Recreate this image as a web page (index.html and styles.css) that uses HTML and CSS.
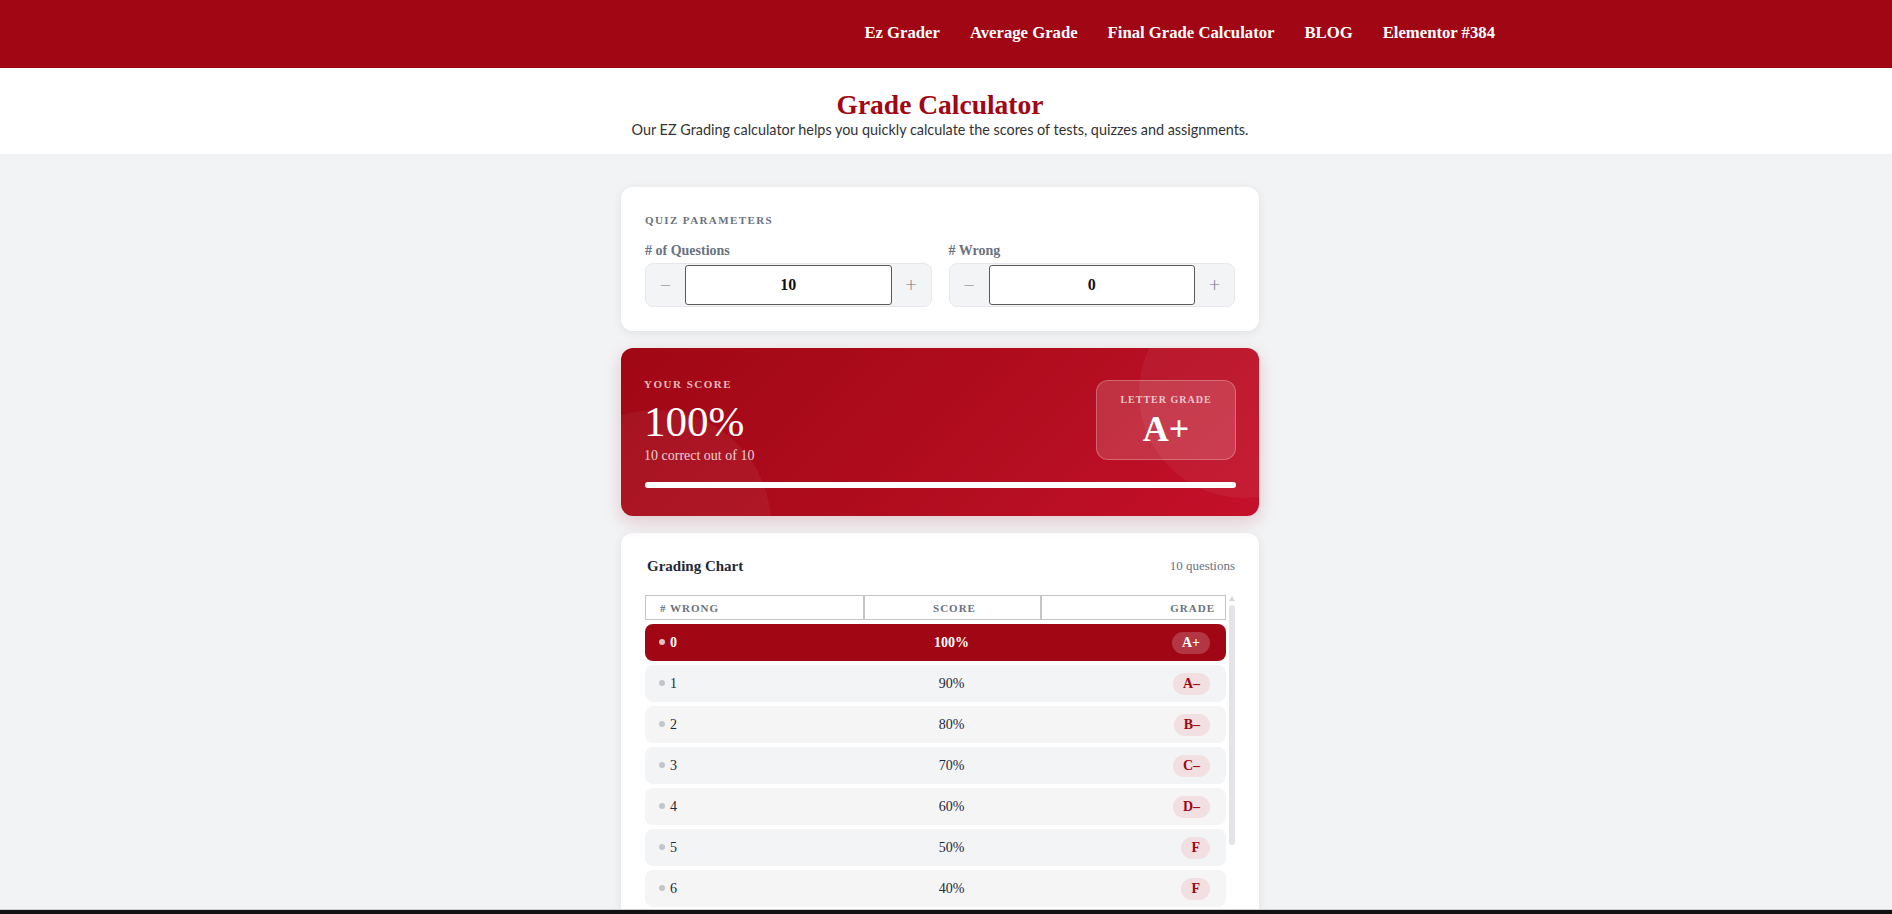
FILE: index.html
```html
<!DOCTYPE html>
<html lang="en">

<head>
    <meta charset="UTF-8">
    <meta name="viewport" content="width=device-width, initial-scale=1.0">
    <title>Grade Calculator</title>
    <link rel="stylesheet" href="styles.css">
</head>

<body>
    <header class="site-header">
        <div class="inner">
            <nav class="main-nav">
                <a href="#">Ez Grader</a>
                <a href="#">Average Grade</a>
                <a href="#">Final Grade Calculator</a>
                <a href="#">BLOG</a>
                <a href="#">Elementor #384</a>
            </nav>
        </div>
    </header>

    <section class="hero">
        <h1>Grade Calculator</h1>
        <p>Our EZ Grading calculator helps you quickly calculate the scores of tests, quizzes and assignments.</p>
    </section>

    <main class="calc">
        <!-- inputs -->
        <div class="card params">
            <div class="section-label">Quiz Parameters</div>
            <div class="fields">
                <div class="field">
                    <label># of Questions</label>
                    <div class="stepper">
                        <button class="step-btn">&minus;</button>
                        <input class="step-input" type="text" value="10">
                        <button class="step-btn">+</button>
                    </div>
                </div>
                <div class="field">
                    <label># Wrong</label>
                    <div class="stepper">
                        <button class="step-btn">&minus;</button>
                        <input class="step-input" type="text" value="0">
                        <button class="step-btn">+</button>
                    </div>
                </div>
            </div>
        </div>

        <!-- result -->
        <div class="score-card">
            <span class="bubble bubble-left"></span>
            <span class="bubble bubble-right"></span>
            <div class="score-top">
                <div class="score-main">
                    <div class="score-label">Your Score</div>
                    <div class="score-value">100%</div>
                    <div class="score-sub">10 correct out of 10</div>
                </div>
                <div class="letter-box">
                    <div class="letter-label">Letter Grade</div>
                    <div class="letter-value">A+</div>
                </div>
            </div>
            <div class="progress"><div class="progress-fill" style="width:100%"></div></div>
        </div>

        <!-- chart -->
        <div class="card chart">
            <div class="chart-head">
                <h2>Grading Chart</h2>
                <span class="chart-count">10 questions</span>
            </div>
            <div class="chart-body">
                <div class="chart-scroll">
                    <table class="grade-table">
                        <thead>
                            <tr>
                                <th class="col-wrong"># Wrong</th>
                                <th class="col-score">Score</th>
                                <th class="col-grade">Grade</th>
                            </tr>
                        </thead>
                        <tbody>
                            <tr class="current">
                                <td class="col-wrong"><span class="dot"></span>0</td>
                                <td class="col-score">100%</td>
                                <td class="col-grade"><span class="pill">A+</span></td>
                            </tr>
                            <tr>
                                <td class="col-wrong"><span class="dot"></span>1</td>
                                <td class="col-score">90%</td>
                                <td class="col-grade"><span class="pill">A&ndash;</span></td>
                            </tr>
                            <tr>
                                <td class="col-wrong"><span class="dot"></span>2</td>
                                <td class="col-score">80%</td>
                                <td class="col-grade"><span class="pill">B&ndash;</span></td>
                            </tr>
                            <tr>
                                <td class="col-wrong"><span class="dot"></span>3</td>
                                <td class="col-score">70%</td>
                                <td class="col-grade"><span class="pill">C&ndash;</span></td>
                            </tr>
                            <tr>
                                <td class="col-wrong"><span class="dot"></span>4</td>
                                <td class="col-score">60%</td>
                                <td class="col-grade"><span class="pill">D&ndash;</span></td>
                            </tr>
                            <tr>
                                <td class="col-wrong"><span class="dot"></span>5</td>
                                <td class="col-score">50%</td>
                                <td class="col-grade"><span class="pill">F</span></td>
                            </tr>
                            <tr>
                                <td class="col-wrong"><span class="dot"></span>6</td>
                                <td class="col-score">40%</td>
                                <td class="col-grade"><span class="pill">F</span></td>
                            </tr>
                            <tr>
                                <td class="col-wrong"><span class="dot"></span>7</td>
                                <td class="col-score">30%</td>
                                <td class="col-grade"><span class="pill">F</span></td>
                            </tr>
                            <tr>
                                <td class="col-wrong"><span class="dot"></span>8</td>
                                <td class="col-score">20%</td>
                                <td class="col-grade"><span class="pill">F</span></td>
                            </tr>
                            <tr>
                                <td class="col-wrong"><span class="dot"></span>9</td>
                                <td class="col-score">10%</td>
                                <td class="col-grade"><span class="pill">F</span></td>
                            </tr>
                            <tr>
                                <td class="col-wrong"><span class="dot"></span>10</td>
                                <td class="col-score">0%</td>
                                <td class="col-grade"><span class="pill">F</span></td>
                            </tr>
                        </tbody>
                    </table>
                </div>
                <div class="scrollbar"><div class="scroll-thumb"></div></div>
            </div>
        </div>
    </main>

    <div class="window-edge"></div>
</body>

</html>
```

FILE: styles.css
```css
body {
    margin: 0;
    background: #f2f3f5;
    font-family: 'Liberation Serif', 'Times New Roman', serif;
    color: #1f2937;
}

/* header */
.site-header {
    background: #a00613;
    height: 68px;
    padding-right: 12px;
}

.site-header .inner {
    max-width: 1140px;
    height: 65px;
    margin: 0 auto;
    display: flex;
    align-items: center;
    justify-content: flex-end;
    padding-right: 15px;
    box-sizing: border-box;
}

.main-nav {
    display: flex;
    gap: 30px;
}

.main-nav a {
    color: #fff;
    text-decoration: none;
    font-weight: bold;
    font-size: 16.7px;
}

/* hero */
.hero {
    background: #fff;
    text-align: center;
    padding: 21px 12px 15px 0;
}

.hero h1 {
    margin: 0;
    color: #a00613;
    font-size: 27.5px;
    line-height: 32px;
}

.hero p {
    margin: 0;
    font-family: Lato, 'Noto Sans', sans-serif;
    font-size: 14.4px;
    line-height: 18px;
    color: #333;
}

/* calculator */
.calc {
    width: 638px;
    margin: 0 auto;
    padding: 33px 12px 0 0;
}

.card {
    background: #fff;
    border-radius: 12px;
    box-shadow: 0 2px 10px rgba(0, 0, 0, .08);
    margin-bottom: 17px;
}

.params {
    padding: 27px 24px 24px;
}

.section-label {
    font-size: 11px;
    font-weight: bold;
    text-transform: uppercase;
    letter-spacing: 1.4px;
    color: #6b7280;
    line-height: 12px;
}

.fields {
    display: grid;
    grid-template-columns: minmax(0, 1fr) minmax(0, 1fr);
    gap: 17px;
    margin-top: 17px;
}

.field label {
    display: block;
    font-size: 14px;
    font-weight: bold;
    color: #6b7280;
    line-height: 16px;
    margin-bottom: 4px;
}

.stepper {
    display: flex;
    height: 44px;
    padding: 1px 0;
    background: #f3f4f6;
    border: 1px solid #e5e7eb;
    border-radius: 8px;
    box-sizing: border-box;
}

.step-btn {
    width: 39px;
    flex: none;
    border: none;
    background: none;
    color: #6b7280;
    font-family: 'DejaVu Sans', sans-serif;
    font-size: 15px;
    font-weight: 300;
    padding: 0;
}

.step-input {
    flex: 1;
    width: 0;
    min-width: 0;
    border: 1px solid #5a5a5a;
    border-radius: 3px;
    text-align: center;
    font-family: 'Liberation Serif', serif;
    font-weight: bold;
    font-size: 16px;
    color: #111;
    background: #fff;
}

/* score */
.score-card {
    position: relative;
    overflow: hidden;
    background: linear-gradient(135deg, #a00714 0%, #b10d1f 55%, #c5102a 100%);
    border-radius: 12px;
    padding: 29px 23px 28px 23px;
    color: #fff;
    margin-bottom: 17px;
    box-shadow: 0 6px 18px rgba(160, 7, 20, .18);
}

.bubble {
    position: absolute;
    border-radius: 50%;
    background: rgba(255, 255, 255, .05);
}

.bubble-left {
    width: 230px;
    height: 230px;
    left: -80px;
    top: 62px;
}

.bubble-right {
    width: 210px;
    height: 210px;
    right: -90px;
    top: -60px;
}

.score-top {
    position: relative;
    display: flex;
    justify-content: space-between;
    align-items: flex-start;
}

.score-label {
    font-size: 11px;
    font-weight: bold;
    letter-spacing: 1.5px;
    text-transform: uppercase;
    color: rgba(255, 255, 255, .72);
    line-height: 14px;
}

.score-value {
    font-size: 43px;
    line-height: 44px;
    margin-top: 9px;
}

.score-sub {
    font-size: 14px;
    color: rgba(255, 255, 255, .8);
    margin-top: 4px;
}

.letter-box {
    width: 140px;
    height: 80px;
    margin-top: 3px;
    box-sizing: border-box;
    background: rgba(255, 255, 255, .15);
    border: 1px solid rgba(255, 255, 255, .25);
    border-radius: 12px;
    text-align: center;
    padding-top: 13px;
}

.letter-label {
    font-size: 10px;
    font-weight: bold;
    letter-spacing: 1px;
    text-transform: uppercase;
    color: rgba(255, 255, 255, .72);
    line-height: 12px;
}

.letter-value {
    font-size: 36px;
    font-weight: bold;
    line-height: 38px;
    margin-top: 4px;
}

.progress {
    position: relative;
    height: 6px;
    margin: 18px 0 0 1px;
    background: rgba(255, 255, 255, .2);
    border-radius: 3px;
}

.progress-fill {
    height: 100%;
    background: #fff;
    border-radius: 3px;
}

/* chart */
.chart {
    padding: 24px 24px 0;
    margin-bottom: 0;
}

.chart-head {
    display: flex;
    justify-content: space-between;
    align-items: center;
    padding: 0 0 0 2px;
    margin-bottom: 20px;
}

.chart-head h2 {
    margin: 0;
    font-size: 15px;
    line-height: 18px;
    color: #1f2937;
}

.chart-count {
    font-size: 13px;
    color: #6b7280;
}

.chart-body {
    display: flex;
    gap: 3px;
}

.chart-scroll {
    flex: 1;
    max-height: 350px;
    overflow: hidden;
}

.scrollbar {
    width: 6px;
    flex: none;
    padding-top: 10px;
    position: relative;
}

.scrollbar::before {
    content: "";
    position: absolute;
    top: 1px;
    left: 0;
    border-left: 3px solid transparent;
    border-right: 3px solid transparent;
    border-bottom: 5px solid #d6d7dc;
}

.scroll-thumb {
    height: 240px;
    background: #e3e4e8;
    border-radius: 3px;
}

.grade-table {
    width: 100%;
    border-collapse: separate;
    border-spacing: 0 4px;
    margin-top: -4px;
}

.grade-table th {
    border: 1px solid #c4c4c4;
    height: 23px;
    padding: 0 10px 0 14px;
    font-size: 11px;
    letter-spacing: 1px;
    text-transform: uppercase;
    color: #6b7280;
}

.grade-table th.col-wrong {
    width: 193px;
    text-align: left;
}

.grade-table th.col-score {
    width: 151px;
    text-align: center;
}

.grade-table th.col-grade {
    text-align: right;
}

.grade-table td {
    height: 37px;
    padding: 0 16px 0 14px;
    background: #f3f4f6;
    font-size: 14px;
    color: #1f2937;
}

.grade-table tbody tr:nth-child(odd) td {
    background: #f5f5f6;
}

.grade-table td.col-wrong {
    border-radius: 8px 0 0 8px;
}

.grade-table td.col-score {
    text-align: center;
}

.grade-table td.col-grade {
    text-align: right;
    border-radius: 0 8px 8px 0;
}

.dot {
    display: inline-block;
    width: 6px;
    height: 6px;
    border-radius: 50%;
    background: #c4c5ca;
    margin-right: 5px;
    vertical-align: 2px;
}

.pill {
    display: inline-block;
    height: 22px;
    line-height: 22px;
    padding: 0 10px;
    border-radius: 11px;
    background: #f1dfe2;
    color: #a00613;
    font-weight: bold;
    font-size: 14px;
}

.grade-table tbody tr.current td {
    background: #a00613;
    color: #fff;
    font-weight: bold;
}

.grade-table tr.current .dot {
    background: rgba(255, 255, 255, .75);
}

.grade-table tr.current .pill {
    background: rgba(255, 255, 255, .2);
    color: #fff;
}

/* the bottom edge of the captured window */
.window-edge {
    position: fixed;
    left: 0;
    right: 0;
    bottom: 0;
    height: 4px;
    background: #111;
    border-top: 1px solid #cfcfcf;
}
```
